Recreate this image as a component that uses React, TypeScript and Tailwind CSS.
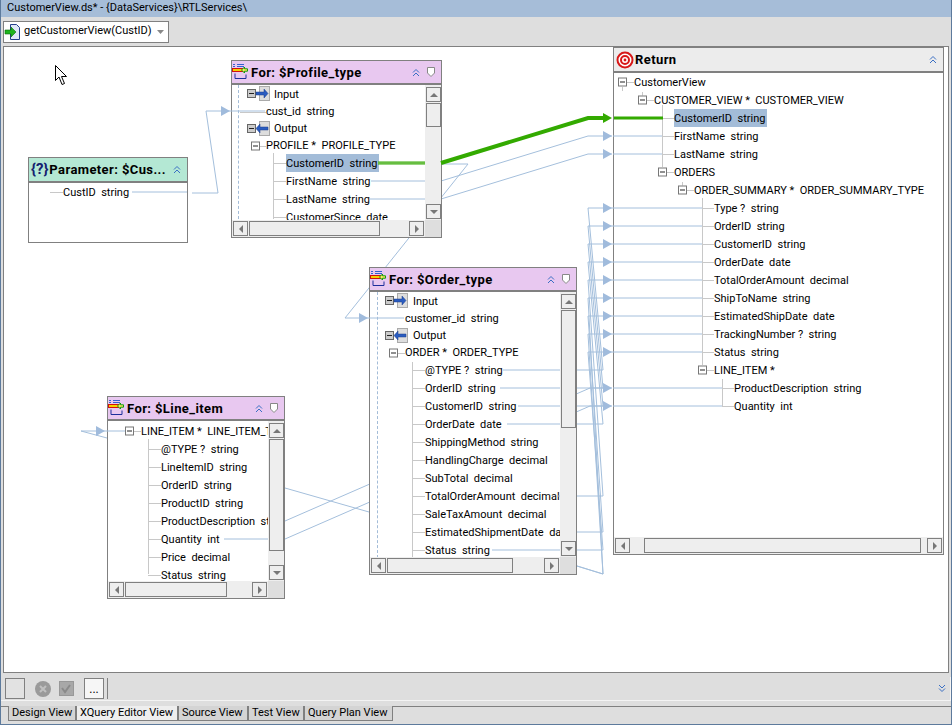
import type { ReactNode } from "react";

const FONT = "font-['Roboto','Liberation_Sans',sans-serif]";

type Row = {
  text: string;
  x: number; // text left edge, relative to the node body
  h?: number;
  box?: number; // expander left edge
  io?: "in" | "out";
  stub?: number; // connector start
  selected?: boolean;
};

function Expander({ x }: { x: number }) {
  return (
    <span className="absolute top-1/2 h-[9px] w-[9px] -translate-y-1/2 border border-[#777] bg-white" style={{ left: x }}>
      <span className="absolute left-[1px] top-[3px] h-px w-[5px] bg-[#222]" />
    </span>
  );
}

function IoIcon({ x, dir }: { x: number; dir: "in" | "out" }) {
  return (
    <svg className="absolute top-0 h-[18px] w-[26px]" style={{ left: x }} viewBox="0 0 26 18">
      <rect x="0.5" y="4.5" width="8" height="8" fill="#ccc" stroke="#666" />
      <path d="M2 8.500h5" stroke="#222" />
      <rect x="12.500" y="1.500" width="10" height="14" fill="#ddd" stroke="#aaa" />
      {dir === "in" ? (
        <path d="M9 7h8V4l4 4.500-4 4.500v-3H9z" fill="#2a5cc0" stroke="#1c3f8a" strokeWidth="0.5" />
      ) : (
        <path d="M21 7h-8V4L9 8.500l4 4.500v-3h8z" fill="#2a5cc0" stroke="#1c3f8a" strokeWidth="0.5" />
      )}
    </svg>
  );
}

function TreeRow({ row }: { row: Row }) {
  const h = row.h ?? 18;
  return (
    <div className="relative w-[600px]" style={{ height: h }}>
      {row.stub !== undefined && (
        <span className="absolute top-1/2 h-px bg-[#c8c8c8]" style={{ left: row.stub, width: row.x - row.stub }} />
      )}
      {row.box !== undefined && !row.io && <Expander x={row.box} />}
      {row.io && <IoIcon x={row.box ?? 0} dir={row.io} />}
      <span
        className={`absolute top-0 whitespace-pre text-[11px] leading-[16px] text-black ${row.selected ? "bg-[#a3bcd8] pr-[2px]" : ""}`}
        style={{ left: row.x, paddingTop: h === 18 ? 2 : 1 }}
      >
        {row.text}
      </span>
    </div>
  );
}

function Arrow({ dir }: { dir: "up" | "down" | "left" | "right" }) {
  const d = { up: "M1 7l4-4 4 4z", down: "M1 3l4 4 4-4z", left: "M7 1L3 5l4 4z", right: "M3 1l4 4-4 4z" }[dir];
  return (
    <span className="flex h-[15px] w-[15px] shrink-0 items-center justify-center border border-[#808080] bg-[#eee]">
      <svg width="10" height="10" viewBox="0 0 10 10">
        <path d={d} fill="#777" />
      </svg>
    </span>
  );
}

function VScroll({ top, height }: { top: number; height: number }) {
  return (
    <div className="flex w-[16px] shrink-0 flex-col bg-[#eee] pb-px pl-px pt-[2px]">
      <Arrow dir="up" />
      <div className="relative flex-1">
        <div className="absolute left-0 w-[15px] border border-[#808080] bg-[#eee]" style={{ top, height }} />
      </div>
      <Arrow dir="down" />
    </div>
  );
}

function HScroll({ left, width }: { left: number; width: number }) {
  return (
    <div className="flex h-[17px] shrink-0 bg-[#eee] p-px">
      <Arrow dir="left" />
      <div className="relative flex-1">
        <div className="absolute top-0 h-[15px] border border-[#808080] bg-[#eee]" style={{ left, width }} />
      </div>
      <Arrow dir="right" />
    </div>
  );
}

function ForIcon() {
  return (
    <svg width="18" height="18" viewBox="0 0 18 18" className="shrink-0">
      <path d="M1 1.500h2M5 1.500h7M1 3.500h2M5 3.500h7" stroke="#3560d0" />
      <rect x="0.5" y="5.500" width="11" height="3" fill="#f5d000" stroke="#d01010" />
      <path d="M3 10.500v5h11v-4" fill="none" stroke="#1c2f9c" />
      <path d="M9.500 7l3-3v1.800h3v2.400h-3V10z" fill="#ffe860" stroke="#0f9a0f" />
    </svg>
  );
}

function ParamIcon() {
  return <span className="ml-[2px] text-[15px] font-bold leading-none text-[#14206e]">{"{?}"}</span>;
}

function ReturnIcon() {
  return (
    <svg width="18" height="18" viewBox="0 0 18 18" className="ml-[2px] shrink-0">
      <circle cx="9" cy="9" r="7.500" fill="white" stroke="#d81818" strokeWidth="2" />
      <circle cx="9" cy="9" r="4" fill="white" stroke="#d81818" strokeWidth="2" />
      <circle cx="9" cy="9" r="1.400" fill="#d81818" />
    </svg>
  );
}

function Chevrons() {
  return (
    <svg width="8" height="9" viewBox="0 0 8 9" className="shrink-0">
      <path d="M1 4.500l3-3 3 3M1 8l3-3 3 3" fill="none" stroke="#3a6fc4" />
    </svg>
  );
}

function Shield() {
  return (
    <svg width="8" height="10" viewBox="0 0 8 10" className="shrink-0">
      <path d="M.5.5h7v5.500L4 9.500.5 6z" fill="#fff" stroke="#888" />
    </svg>
  );
}

function Node({
  x,
  y,
  w,
  h,
  color,
  icon,
  title,
  shield,
  headH = 22,
  children,
  guides,
  v,
  hs,
}: {
  x: number;
  y: number;
  w: number;
  h: number;
  color: string;
  icon: ReactNode;
  title: string;
  shield?: boolean;
  headH?: number;
  children: ReactNode;
  guides?: ReactNode;
  v?: { top: number; height: number };
  hs?: { left: number; width: number };
}) {
  return (
    <div className={`absolute flex flex-col border border-[#808080] bg-white ${FONT}`} style={{ left: x, top: y, width: w, height: h }}>
      <div className={`flex shrink-0 items-center pr-[6px] ${color}`} style={{ height: headH }}>
        {icon}
        <span className="ml-px flex-1 whitespace-pre text-[13px] font-bold leading-none tracking-[0.4px] text-black">{title}</span>
        <Chevrons />
        {shield && <span className="ml-[7px] flex"><Shield /></span>}
      </div>
      <div className="h-px shrink-0 bg-[#808080]" />
      <div className="h-px shrink-0 bg-[#808080]" />
      <div className="flex min-h-0 flex-1">
        <div className="relative min-w-0 flex-1 overflow-hidden">
          {guides}
          {children}
        </div>
        {v && <VScroll top={v.top} height={v.height} />}
      </div>
      {hs && (
        <div className="flex shrink-0">
          <div className="min-w-0 flex-1">
            <HScroll left={hs.left} width={hs.width} />
          </div>
          {v && <div className="w-[16px] bg-[#dedede]" />}
        </div>
      )}
    </div>
  );
}

function Guide({ x, y, h, dashed }: { x: number; y: number; h: number; dashed?: boolean }) {
  return (
    <span
      className={`absolute w-0 border-l ${dashed ? "border-dashed border-[#a3bcd8]" : "border-[#c8c8c8]"}`}
      style={{ left: x, top: y, height: h }}
    />
  );
}

const profileRows: Row[] = [
  { text: "Input", x: 42, h: 18, box: 15, io: "in" },
  { text: "cust_id  string", x: 34, h: 17, stub: 8 },
  { text: "Output", x: 42, h: 17, box: 15, io: "out" },
  { text: "PROFILE *  PROFILE_TYPE", x: 34, h: 17, box: 19, stub: 24 },
  { text: "CustomerID  string", x: 54, stub: 41, selected: true },
  { text: "FirstName  string", x: 54, stub: 41 },
  { text: "LastName  string", x: 54, stub: 41 },
  { text: "CustomerSince  date", x: 54, stub: 41 },
];

const orderRows: Row[] = [
  { text: "Input", x: 43, h: 18, box: 15, io: "in" },
  { text: "customer_id  string", x: 35, h: 17 },
  { text: "Output", x: 43, h: 17, box: 15, io: "out" },
  { text: "ORDER *  ORDER_TYPE", x: 35, h: 17, box: 19, stub: 24 },
  ...["@TYPE ?  string", "OrderID  string", "CustomerID  string", "OrderDate  date", "ShippingMethod  string", "HandlingCharge  decimal", "SubTotal  decimal", "TotalOrderAmount  decimal", "SaleTaxAmount  decimal", "EstimatedShipmentDate  date", "Status  string"].map(
    (text) => ({ text, x: 55, stub: 42 }),
  ),
];

const lineRows: Row[] = [
  { text: "LINE_ITEM *  LINE_ITEM_TYPE", x: 33, box: 17, stub: 22 },
  ...["@TYPE ?  string", "LineItemID  string", "OrderID  string", "ProductID  string", "ProductDescription  string", "Quantity  int", "Price  decimal", "Status  string"].map(
    (text) => ({ text, x: 53, stub: 40 }),
  ),
];

const returnRows: Row[] = [
  { text: "CustomerView", x: 20, box: 4, stub: 9 },
  { text: "CUSTOMER_VIEW *  CUSTOMER_VIEW", x: 40, box: 24, stub: 29 },
  { text: "CustomerID  string", x: 60, stub: 48, selected: true },
  { text: "FirstName  string", x: 60, stub: 48 },
  { text: "LastName  string", x: 60, stub: 48 },
  { text: "ORDERS", x: 60, box: 44, stub: 49 },
  { text: "ORDER_SUMMARY *  ORDER_SUMMARY_TYPE", x: 80, box: 64, stub: 69 },
  ...["Type ?  string", "OrderID  string", "CustomerID  string", "OrderDate  date", "TotalOrderAmount  decimal", "ShipToName  string", "EstimatedShipDate  date", "TrackingNumber ?  string", "Status  string"].map(
    (text) => ({ text, x: 100, stub: 88 }),
  ),
  { text: "LINE_ITEM *", x: 100, box: 84, stub: 89 },
  { text: "ProductDescription  string", x: 120, stub: 108 },
  { text: "Quantity  int", x: 120, stub: 108 },
];

// wires are given in window coordinates, the svg sits on the canvas at 0,0
const wires: string[] = [
  "192,193 218,193 206,111 231,111",
  "441,164 468,164 345,318 369,318",
  "441,199 588,154 612,154",
  "441,181 588,136 612,136",
  "285,488 369,512",
  "285,521 590,388 612,388",
  "285,539 590,406 612,406",
  "81,431 107,431",
  "81,431 107,438",
];

// source row in the order node -> target row in the return node
const bundle: [number, number][] = [
  [370, 208],
  [388, 226],
  [406, 244],
  [424, 262],
  [496, 280],
  [574, 298],
  [532, 316],
  [574, 334],
  [550, 352],
];

const innerWires = [
  "231,111 265,111",
  "371,181 425,181",
  "369,199 425,199",
  "369,318 404,318",
  "107,431 125,431",
  "503,370 560,370",
  "500,388 560,388",
  "518,406 560,406",
  "507,424 560,424",
  "558,496 560,496",
  "492,550 560,550",
  "224,539 268,539",
  "132,192 187,192",
  "613,136 662,136",
  "613,154 662,154",
  ...[208, 226, 244, 262, 280, 298, 316, 334, 352].map((y) => `613,${y} 702,${y}`),
  "613,388 722,388",
  "613,406 722,406",
];

const arrowHeads: [number, number][] = [
  [230, 111],
  [368, 318],
  [105, 431],
  ...[208, 226, 244, 262, 280, 298, 316, 334, 352, 388, 406, 136, 154].map((y): [number, number] => [612, y]),
];

function Tab({ label, width, active }: { label: string; width: string; active?: boolean }) {
  return (
    <span
      className={`-mt-px h-[15px] shrink-0 whitespace-pre border-x border-b border-[#808080] pl-[3px] text-[11px] leading-[13px] ${width} ${
        active ? "bg-[#eee]" : "bg-[#d4d4d4]"
      }`}
    >
      {label}
    </span>
  );
}

export default function App() {
  return (
    <div className={`flex h-[725px] w-[952px] flex-col overflow-hidden border-x border-b border-[#5d7a9c] bg-[#dedede] ${FONT}`}>
      <div className="flex h-[17px] shrink-0 items-center bg-[#a6bdd8] pl-[6px] text-[11px] text-black">
        {"CustomerView.ds* - {DataServices}\\RTLServices\\"}
      </div>
      <div className="flex h-[29px] shrink-0 items-center pl-[2px]">
        <div className="flex h-[22px] w-[166px] items-center border border-[#808080] bg-white">
          <svg width="19" height="18" viewBox="0 0 19 18" className="shrink-0">
            <path d="M6.500 1.500h6l3 3v12h-9z" fill="#dfe8f8" stroke="#24408c" />
            <path d="M1 7h6V4l5 5-5 5v-3H1z" fill="#1eb41e" stroke="#0a6a0a" strokeWidth="0.6" />
          </svg>
          <span className="ml-px flex-1 whitespace-pre text-[11px] text-black">getCustomerView(CustID)</span>
          <span className="h-[16px] w-px bg-[#555]" />
          <svg width="18" height="10" viewBox="0 0 18 10" className="shrink-0">
            <path d="M5 3h7L8.500 7z" fill="#888" />
          </svg>
        </div>
      </div>

      <div className="relative mx-[2px] h-[627px] shrink-0 border border-[#808080] bg-white">
        {/* canvas inner box is offset 4,47 from the window, wires use window coordinates */}
        <svg className="absolute left-[-4px] top-[-47px] h-[725px] w-[952px]" viewBox="0 0 952 725" fill="none" stroke="#a4bfdc">
          {wires.map((p) => (
            <polyline key={p} points={p} />
          ))}
          {bundle.map(([from, to]) => (
            <polyline key={to} points={`${from === 574 ? "577,566" : `577,${from}`} 603,${from} 588,${to} 613,${to}`} />
          ))}
        </svg>

        <div className="absolute left-[-4px] top-[-47px]">
          <Node x={28} y={157} w={160} h={86} color="bg-[#b4e8d4]" icon={<ParamIcon />} title="Parameter: $Cus..." headH={23}>
            <TreeRow row={{ text: "CustID  string", x: 34, stub: 21 }} />
          </Node>

          <Node
            x={231}
            y={60}
            w={211}
            h={178}
            color="bg-[#e8c8f0]"
            icon={<ForIcon />}
            title="For: $Profile_type"
            shield
            v={{ top: 1, height: 24 }}
            hs={{ left: 1, width: 131 }}
            guides={
              <>
                <Guide x={6} y={0} h={134} dashed />
                <Guide x={41} y={68} h={66} />
              </>
            }
          >
            {profileRows.map((r) => (
              <TreeRow key={r.text} row={r} />
            ))}
          </Node>

          <Node
            x={369}
            y={267}
            w={208}
            h={308}
            color="bg-[#e8c8f0]"
            icon={<ForIcon />}
            title="For: $Order_type"
            shield
            v={{ top: 1, height: 118 }}
            hs={{ left: 1, width: 126 }}
            guides={
              <>
                <Guide x={7} y={0} h={266} dashed />
                <Guide x={42} y={70} h={196} />
              </>
            }
          >
            {orderRows.map((r) => (
              <TreeRow key={r.text} row={r} />
            ))}
          </Node>

          <Node
            x={107}
            y={396}
            w={178}
            h={203}
            color="bg-[#e8c8f0]"
            icon={<ForIcon />}
            title="For: $Line_item"
            shield
            v={{ top: 1, height: 112 }}
            hs={{ left: 1, width: 102 }}
            guides={<Guide x={40} y={18} h={135} />}
          >
            <div className="h-px" />
            {lineRows.map((r) => (
              <TreeRow key={r.text} row={r} />
            ))}
          </Node>

          <Node
            x={613}
            y={47}
            w={331}
            h={508}
            color="bg-[#ececec]"
            icon={<ReturnIcon />}
            title="Return"
            headH={23}
            hs={{ left: 14, width: 277 }}
            guides={
              <>
                <Guide x={8} y={14} h={4} />
                <Guide x={28} y={19} h={4} />
                <Guide x={48} y={32} h={62} />
                <Guide x={68} y={109} h={4} />
                <Guide x={88} y={125} h={167} />
                <Guide x={108} y={306} h={27} />
              </>
            }
          >
            {returnRows.map((r) => (
              <TreeRow key={r.text} row={r} />
            ))}
          </Node>

          {/* links painted over the node bodies */}
          <svg className="pointer-events-none absolute left-0 top-0 h-[725px] w-[952px]" viewBox="0 0 952 725" fill="none">
            <g stroke="#a4bfdc">
              {innerWires.map((p) => (
                <polyline key={p} points={p} />
              ))}
            </g>
            <polyline points="378,163 425,163" stroke="#33aa00" strokeWidth="3" />
            <polyline points="378,163 425,163" stroke="#9ad080" strokeWidth="1" />
            <polyline points="441,163 588,118 605,118" stroke="#33aa00" strokeWidth="4" />
            <path d="M603 113L612 118L603 123z" fill="#33aa00" />
            <polyline points="614,118 663,118" stroke="#33aa00" strokeWidth="3" />
            {arrowHeads.map(([x, y]) => (
              <path key={`${x}-${y}`} d={`M${x - 9} ${y - 5}L${x} ${y}L${x - 9} ${y + 5}z`} fill="#a0bbdc" />
            ))}
          </svg>

          <svg className="pointer-events-none absolute left-[55px] top-[65px]" width="13" height="22" viewBox="0 0 13 22">
            <path d="M.5.500v15l3.500-3.500 3 7.500 2.500-1-3-7h5z" fill="#fff" stroke="#000" />
          </svg>
        </div>
      </div>

      <div className="h-[34px] shrink-0 border-b border-[#808080] pt-[4px]">
        <div className="flex h-[24px] items-center border-b border-r border-[#f4f4f4] pl-[4px]">
          <span className="h-[21px] w-[20px] border border-[#808080] bg-[#e2e2e2]" />
          <svg width="16" height="16" viewBox="0 0 16 16" className="ml-[10px] shrink-0">
            <circle cx="8" cy="8" r="8" fill="#9a9a9a" />
            <path d="M5 5l6 6M11 5l-6 6" stroke="#c0c0c0" strokeWidth="2" />
          </svg>
          <svg width="15" height="15" viewBox="0 0 15 15" className="ml-[8px] shrink-0">
            <rect width="14" height="14" x="0.5" y="0.500" fill="#a8a8a8" stroke="#989898" />
            <path d="M3 7l3 4 5-7" fill="none" stroke="#8a8a8a" strokeWidth="2" />
          </svg>
          <span className="ml-[10px] flex h-[21px] w-[20px] items-center justify-center border border-[#808080] bg-[#f6f6f6] text-[12px] text-black">...</span>
          <span className="ml-[3px] h-[21px] flex-1 border-l border-[#808080]" />
          <svg width="8" height="9" viewBox="0 0 8 9" className="mr-[4px] shrink-0">
            <path d="M1 1l3 3 3-3M1 4.500l3 3 3-3" fill="none" stroke="#3a6fc4" />
          </svg>
        </div>
      </div>

      <div className="flex flex-1 items-start pl-[7px] text-black">
        <Tab label="Design View" width="w-[68px]" />
        <Tab label="XQuery Editor View" width="w-[102px]" active />
        <Tab label="Source View" width="w-[70px]" />
        <Tab label="Test View" width="w-[56px]" />
        <Tab label="Query Plan View" width="w-[89px]" />
      </div>
    </div>
  );
}
